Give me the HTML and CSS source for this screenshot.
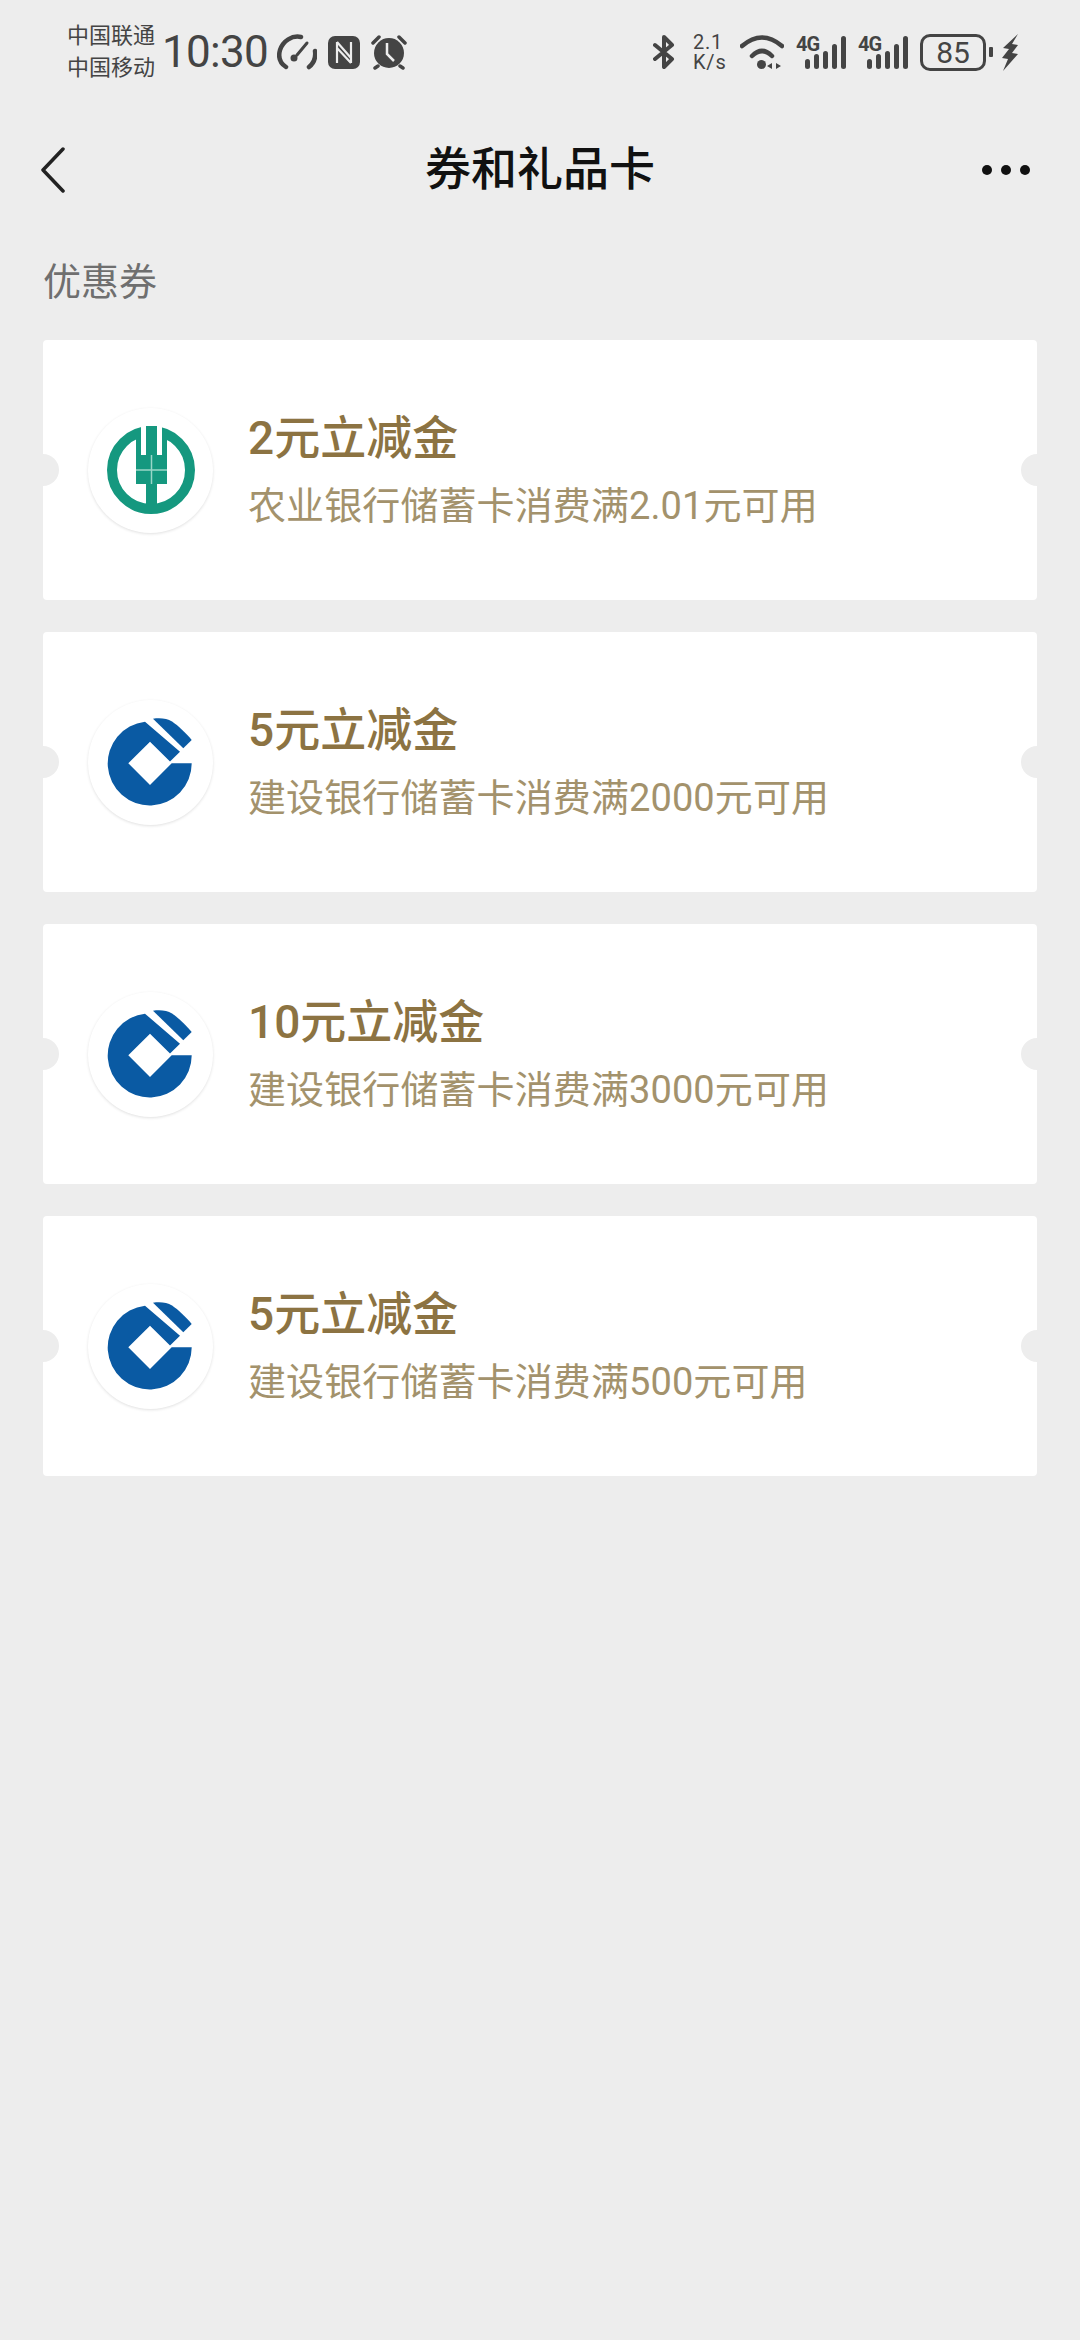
FILE: index.html
```html
<!DOCTYPE html>
<html lang="zh-CN">
<head>
  <meta charset="UTF-8">
  <meta name="viewport" content="width=device-width, initial-scale=1.0">
  <title>券和礼品卡</title>
  <link rel="stylesheet" href="styles.css">
</head>
<body>
  <svg class="defs" width="0" height="0">
    <symbol id="logo-abc" viewBox="0 0 88 88">
      <circle cx="44" cy="44" r="39" fill="none" stroke="#15987f" stroke-width="10"/>
      <rect x="34" y="0" width="5" height="29" fill="#fff"/>
      <rect x="50" y="0" width="5" height="29" fill="#fff"/>
      <rect x="39" y="0" width="11" height="30" fill="#15987f"/>
      <rect x="29" y="3" width="5" height="28" fill="#15987f"/>
      <rect x="55" y="3" width="5" height="28" fill="#15987f"/>
      <rect x="29" y="29" width="31" height="29" fill="#15987f"/>
      <rect x="39" y="57" width="11" height="27" fill="#15987f"/>
      <path d="M29 44h31M44.500 29v29" stroke="#9ad6c8" stroke-width="1.500" fill="none"/>
    </symbol>
    <symbol id="logo-ccb" viewBox="0 0 88 88">
      <path fill="#0a5aa3" d="M84.700 45.300A42 42 0 1 1 38 3.700L73 33.700 63 43.500 43 23.700 21.300 45.300 43 67 64.700 45.300Z"/>
      <path fill="#0a5aa3" d="M46 .7C53 -.3 60 .3 65 3.500 71 7.500 79 15 84.700 22L76.300 30.300Z"/>
    </symbol>
  </svg>

  <div class="status-bar">
    <div class="status-left">
      <div class="carriers">
        <span>中国联通</span>
        <span>中国移动</span>
      </div>
      <span class="time">10:30</span>
      <svg class="ico" width="40" height="36" viewBox="0 0 40 36" fill="none" stroke="#444" stroke-width="4.500" stroke-linecap="round">
        <path d="M9 33C3 29 1 23 3 16 6 7 15 1 24 3"/>
        <path d="M38 17C39 24 37 29 32 33"/>
        <path d="M30 9 20 21" stroke-width="3"/>
        <circle cx="17" cy="24" r="3.500" fill="#444" stroke="none"/>
      </svg>
      <svg class="ico" width="32" height="33" viewBox="0 0 32 33">
        <rect width="32" height="33" rx="7" fill="#444"/>
        <path d="M9 6v21M23 6v21M9 6 23 22M9 12 23 27" stroke="#ededed" stroke-width="2.200" fill="none"/>
      </svg>
      <svg class="ico" width="36" height="36" viewBox="0 0 36 36">
        <circle cx="18" cy="19" r="15" fill="#444"/>
        <path d="M2 9 8 3M34 9 28 3M7 32 4 34M29 32 32 34" stroke="#444" stroke-width="3.500" stroke-linecap="round"/>
        <path d="M16 9v11l7 7" stroke="#ededed" stroke-width="2.500" fill="none"/>
      </svg>
    </div>
    <div class="status-right">
      <svg class="ico bt" width="22" height="36" viewBox="0 0 22 36" fill="none" stroke="#444" stroke-width="4" stroke-linejoin="round" stroke-linecap="round">
        <path d="M2 11 19 25 11 33V3l8 8L2 25"/>
      </svg>
      <div class="speed">
        <span>2.1</span>
        <span>K/s</span>
      </div>
      <svg class="ico wifi" width="44" height="34" viewBox="0 0 44 34" fill="none" stroke="#444" stroke-width="4.500" stroke-linecap="round">
        <path d="M2 11Q22 -6 42 11"/>
        <path d="M12 21Q22 11 32 21"/>
        <circle cx="21.500" cy="29.500" r="4.500" fill="#444" stroke="none"/>
        <path d="M32 28v6l-5-3zM36 28v6l5-3z" fill="#444" stroke="none"/>
      </svg>
      <div class="signal">
        <span class="net">4G</span>
        <i class="bar b1"></i><i class="bar b2"></i><i class="bar b3"></i><i class="bar b4"></i><i class="bar b5"></i>
      </div>
      <div class="signal">
        <span class="net">4G</span>
        <i class="bar b1"></i><i class="bar b2"></i><i class="bar b3"></i><i class="bar b4"></i><i class="bar b5"></i>
      </div>
      <div class="battery">85</div>
      <i class="battery-nub"></i>
      <svg class="ico bolt" width="16" height="37" viewBox="0 0 16 37">
        <path fill="#444" d="M16 0 1 14 7 15 0 24 6 25 1 37 16 20 10 19 16 11 10 10Z"/>
      </svg>
    </div>
  </div>

  <div class="nav">
    <svg class="nav-back" width="24" height="46" viewBox="0 0 24 46" fill="none" stroke="#222" stroke-width="3.500" stroke-linecap="round" stroke-linejoin="round">
      <path d="M22 2 2 23l20 21"/>
    </svg>
    <h1>券和礼品卡</h1>
    <div class="nav-more"><i></i><i></i><i></i></div>
  </div>

  <div class="section-title">优惠券</div>

  <div class="coupons">
    <div class="coupon">
      <div class="coupon-logo"><svg width="88" height="88"><use href="#logo-abc"/></svg></div>
      <div class="coupon-text">
        <div class="coupon-name">2元立减金</div>
        <div class="coupon-desc">农业银行储蓄卡消费满2.01元可用</div>
      </div>
    </div>
    <div class="coupon">
      <div class="coupon-logo"><svg width="88" height="88"><use href="#logo-ccb"/></svg></div>
      <div class="coupon-text">
        <div class="coupon-name">5元立减金</div>
        <div class="coupon-desc">建设银行储蓄卡消费满2000元可用</div>
      </div>
    </div>
    <div class="coupon">
      <div class="coupon-logo"><svg width="88" height="88"><use href="#logo-ccb"/></svg></div>
      <div class="coupon-text">
        <div class="coupon-name">10元立减金</div>
        <div class="coupon-desc">建设银行储蓄卡消费满3000元可用</div>
      </div>
    </div>
    <div class="coupon">
      <div class="coupon-logo"><svg width="88" height="88"><use href="#logo-ccb"/></svg></div>
      <div class="coupon-text">
        <div class="coupon-name">5元立减金</div>
        <div class="coupon-desc">建设银行储蓄卡消费满500元可用</div>
      </div>
    </div>
  </div>
</body>
</html>
```

FILE: styles.css
```css
* {
  box-sizing: border-box;
  margin: 0;
  padding: 0;
}

body {
  width: 1080px;
  height: 2340px;
  overflow: hidden;
  background: #ededed;
  font-family: Roboto, "Noto Sans CJK SC", sans-serif;
}

.defs {
  position: absolute;
}

.ico {
  display: block;
  flex: none;
}

.status-bar {
  height: 104px;
  padding: 0 62px 0 67px;
  display: flex;
  justify-content: space-between;
  align-items: center;
  color: #444;
}

.status-left,
.status-right {
  display: flex;
  align-items: center;
}

.carriers {
  display: flex;
  flex-direction: column;
  font-size: 22px;
  line-height: 32px;
  margin-right: 7px;
}

.time {
  font-size: 44px;
  line-height: 52px;
  letter-spacing: -0.7px;
  margin-right: 9px;
}

.status-left .ico {
  margin-right: 11px;
}

.status-right .bt {
  margin-right: 18px;
}

.speed {
  width: 33px;
  display: flex;
  flex-direction: column;
  font-size: 20px;
  line-height: 20px;
  letter-spacing: 0.8px;
  margin-right: 14px;
}

.status-right .wifi {
  margin-right: 12px;
}

.signal {
  width: 50px;
  height: 34px;
  position: relative;
  display: flex;
  align-items: flex-end;
  justify-content: flex-end;
  gap: 4px;
  margin-right: 12px;
}

.net {
  position: absolute;
  left: 0;
  top: -3px;
  font-size: 20px;
  line-height: 24px;
  font-weight: 700;
  letter-spacing: -1px;
}

.bar {
  width: 5px;
  background: #444;
  border-radius: 2.5px;
}

.b1 { height: 10px; }
.b2 { height: 15px; }
.b3 { height: 18px; }
.b4 { height: 25px; }
.b5 { height: 33px; }

.battery {
  width: 66px;
  height: 37px;
  border: 3px solid #444;
  border-radius: 10px;
  font-size: 30px;
  line-height: 31px;
  text-align: center;
}

.battery-nub {
  width: 4px;
  height: 10px;
  margin-left: 3px;
  margin-right: 9px;
  background: #444;
  border-radius: 1px;
}

.nav {
  height: 132px;
  padding: 0 50px 0 41px;
  display: flex;
  justify-content: space-between;
  align-items: center;
  position: relative;
}

.nav h1 {
  position: absolute;
  left: 0;
  right: 0;
  top: 0;
  text-align: center;
  font-size: 46px;
  line-height: 130px;
  font-weight: 500;
  color: #111;
}

.nav-more {
  display: flex;
  gap: 9px;
}

.nav-more i {
  width: 10px;
  height: 10px;
  border-radius: 50%;
  background: #111;
}

.section-title {
  margin-top: 22px;
  padding-left: 43px;
  font-size: 38px;
  line-height: 48px;
  color: #6f6f6f;
}

.coupons {
  margin: 34px 43px 0;
  display: flex;
  flex-direction: column;
  gap: 32px;
}

.coupon {
  height: 260px;
  padding-left: 45px;
  display: flex;
  align-items: center;
  gap: 35px;
  background: #fff;
  border-radius: 4px;
  position: relative;
  overflow: hidden;
}

.coupon::before,
.coupon::after {
  content: "";
  position: absolute;
  top: 114px;
  width: 32px;
  height: 32px;
  border-radius: 50%;
  background: #ededed;
}

.coupon::before {
  left: -16px;
}

.coupon::after {
  right: -16px;
}

.coupon-logo {
  width: 125px;
  height: 125px;
  flex: none;
  display: flex;
  align-items: center;
  justify-content: center;
  border-radius: 50%;
  background: #fff;
  box-shadow: 0 1px 3px rgba(0,0,0,0.12);
}

.coupon-logo svg {
  display: block;
}

.coupon-name {
  font-size: 46px;
  line-height: 60px;
  font-weight: 500;
  color: #8c7342;
  margin-top: -2px;
}

.coupon-desc {
  margin-top: 14px;
  font-size: 38px;
  line-height: 48px;
  letter-spacing: 0.1px;
  color: #a3926c;
}
```
